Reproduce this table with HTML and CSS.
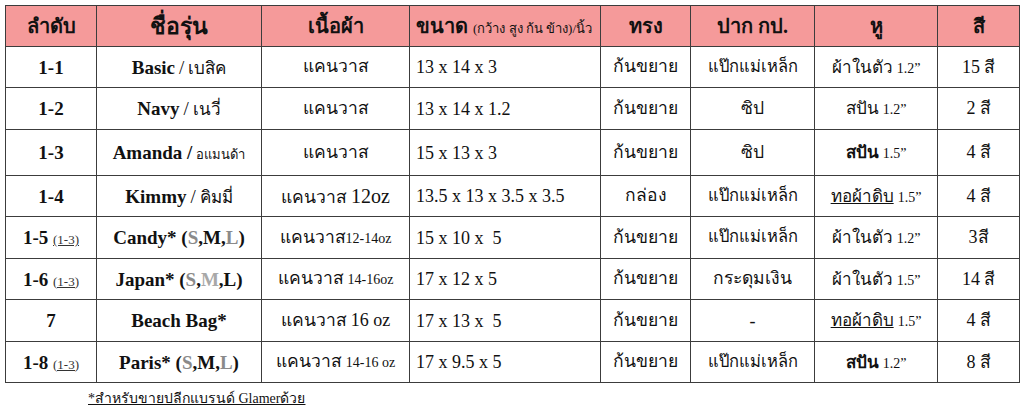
FILE: index.html
```html
<!DOCTYPE html>
<html lang="th">
<head>
<meta charset="utf-8">
<title>ตารางรุ่นกระเป๋า</title>
<link rel="stylesheet" href="styles.css">
</head>
<body>
<div class="page">
  <table class="spec">
    <colgroup>
      <col class="c1"><col class="c2"><col class="c3"><col class="c4"><col class="c5"><col class="c6"><col class="c7"><col class="c8">
    </colgroup>
    <thead>
      <tr class="head">
        <th>ลำดับ</th>
        <th class="wide">ชื่อรุ่น</th>
        <th>เนื้อผ้า</th>
        <th class="left">ขนาด <span class="sub">(กว้าง สูง ก้น ข้าง)/นิ้ว</span></th>
        <th>ทรง</th>
        <th>ปาก กป.</th>
        <th>หู</th>
        <th>สี</th>
      </tr>
    </thead>
    <tbody>
      <tr class="r41">
        <td class="no">1-1</td>
        <td><b class="en">Basic</b> <span class="en">/</span> <span class="th">เบสิค</span></td>
        <td class="th big">แคนวาส</td>
        <td class="left en size">13 x 14 x 3</td>
        <td class="th big">ก้นขยาย</td>
        <td class="th mid">แป๊กแม่เหล็ก</td>
        <td><span class="th">ผ้าในตัว</span> <span class="en sm">1.2”</span></td>
        <td><span class="en size">15</span> <span class="th big">สี</span></td>
      </tr>
      <tr class="r42">
        <td class="no">1-2</td>
        <td><b class="en">Navy</b> <span class="en">/</span> <span class="th">เนวี่</span></td>
        <td class="th big">แคนวาส</td>
        <td class="left en size">13 x 14 x 1.2</td>
        <td class="th big">ก้นขยาย</td>
        <td class="th big">ซิป</td>
        <td><span class="th">สปัน</span> <span class="en sm">1.2”</span></td>
        <td><span class="en size">2</span> <span class="th big">สี</span></td>
      </tr>
      <tr class="r46">
        <td class="no">1-3</td>
        <td><b class="en">Amanda /</b> <span class="th tiny">อแมนด้า</span></td>
        <td class="th big">แคนวาส</td>
        <td class="left en size">15 x 13 x 3</td>
        <td class="th big">ก้นขยาย</td>
        <td class="th big">ซิป</td>
        <td><b class="th">สปัน</b> <span class="en sm">1.5”</span></td>
        <td><span class="en size">4</span> <span class="th big">สี</span></td>
      </tr>
      <tr class="r41">
        <td class="no">1-4</td>
        <td><b class="en">Kimmy</b> <span class="en">/</span> <span class="th">คิมมี่</span></td>
        <td><span class="th big">แคนวาส</span> <span class="en lg">12oz</span></td>
        <td class="left en size">13.5 x 13 x 3.5 x 3.5</td>
        <td class="th big">กล่อง</td>
        <td class="th mid">แป๊กแม่เหล็ก</td>
        <td><u class="th">ทอผ้าดิบ</u> <span class="en sm">1.5”</span></td>
        <td><span class="en size">4</span> <span class="th big">สี</span></td>
      </tr>
      <tr class="r42">
        <td class="no">1-5 <u class="ref">(1-3)</u></td>
        <td><b class="en">Candy* (<span class="grey">S</span>,M,<span class="grey">L</span>)</b></td>
        <td><span class="th big">แคนวาส</span><span class="en sm">12-14oz</span></td>
        <td class="left en size">15 x 10 x&nbsp; 5</td>
        <td class="th big">ก้นขยาย</td>
        <td class="th mid">แป๊กแม่เหล็ก</td>
        <td><span class="th">ผ้าในตัว</span> <span class="en sm">1.2”</span></td>
        <td><span class="en size">3</span><span class="th big">สี</span></td>
      </tr>
      <tr class="r41">
        <td class="no">1-6 <u class="ref">(1-3)</u></td>
        <td><b class="en">Japan* (<span class="grey">S</span>,<span class="lite">M</span>,L)</b></td>
        <td><span class="th big">แคนวาส</span> <span class="en sm">14-16oz</span></td>
        <td class="left en size">17 x 12 x 5</td>
        <td class="th big">ก้นขยาย</td>
        <td class="th big">กระดุมเงิน</td>
        <td><span class="th">ผ้าในตัว</span> <span class="en sm">1.5”</span></td>
        <td><span class="en size">14</span> <span class="th big">สี</span></td>
      </tr>
      <tr class="r42">
        <td class="no">7</td>
        <td><b class="en">Beach Bag*</b></td>
        <td><span class="th big">แคนวาส</span> <span class="en size">16 oz</span></td>
        <td class="left en size">17 x 13 x&nbsp; 5</td>
        <td class="th big">ก้นขยาย</td>
        <td class="en size">-</td>
        <td><u class="th">ทอผ้าดิบ</u> <span class="en sm">1.5”</span></td>
        <td><span class="en size">4</span> <span class="th big">สี</span></td>
      </tr>
      <tr class="r41">
        <td class="no">1-8 <u class="ref">(1-3)</u></td>
        <td><b class="en">Paris* (<span class="grey">S</span>,M,<span class="grey">L</span>)</b></td>
        <td><span class="th big">แคนวาส</span> <span class="en sm">14-16 oz</span></td>
        <td class="left en size">17 x 9.5 x 5</td>
        <td class="th big">ก้นขยาย</td>
        <td class="th mid">แป๊กแม่เหล็ก</td>
        <td><b class="th">สปัน</b> <span class="en sm">1.2”</span></td>
        <td><span class="en size">8</span> <span class="th big">สี</span></td>
      </tr>
    </tbody>
  </table>
  <p class="note"><u>*สำหรับขายปลีกแบรนด์ Glamerด้วย</u></p>
</div>
</body>
</html>
```

FILE: styles.css
```css
html, body {
  margin: 0;
  padding: 0;
  background: #ffffff;
}
body {
  font-family: "Liberation Serif", "Times New Roman", serif;
  color: #111111;
}
.page {
  padding: 5px 5px 0 5px;
}
.spec {
  border-collapse: collapse;
  table-layout: fixed;
  width: 1014px;
}
.c1 { width: 91px; }
.c2 { width: 165px; }
.c3 { width: 148px; }
.c4 { width: 191px; }
.c5 { width: 90px; }
.c6 { width: 124px; }
.c7 { width: 123px; }
.c8 { width: 82px; }

.spec th, .spec td {
  border: 1px solid #3c3c3c;
  text-align: center;
  vertical-align: middle;
  padding: 0 4px;
  white-space: nowrap;
  line-height: 1;
}
.head { height: 41px; }
.head th {
  background: #f59a9a;
  font-size: 20px;
  font-weight: bold;
}
.head th.wide { font-size: 23px; }
.spec th.left, .spec td.left {
  text-align: left;
  padding-left: 6px;
}
.sub {
  font-size: 13px;
  font-weight: normal;
}
.r41 { height: 41px; }
.r42 { height: 42px; }
.r46 { height: 46px; }

.no {
  font-size: 19px;
  font-weight: bold;
}
.ref {
  font-size: 13px;
  font-weight: normal;
  color: #333333;
}
.en { font-size: 19px; }
.size { font-size: 18px; }
.sm { font-size: 14px; }
.lg { font-size: 20px; }
.th { font-size: 17px; }
.big { font-size: 17.5px; }
.mid { font-size: 16.5px; }
.tiny { font-size: 13px; }
.grey { color: #8a8a8a; }
.lite { color: #a8a8a8; }
.note {
  margin: 4px 0 0 83px;
  font-size: 14px;
}
```
